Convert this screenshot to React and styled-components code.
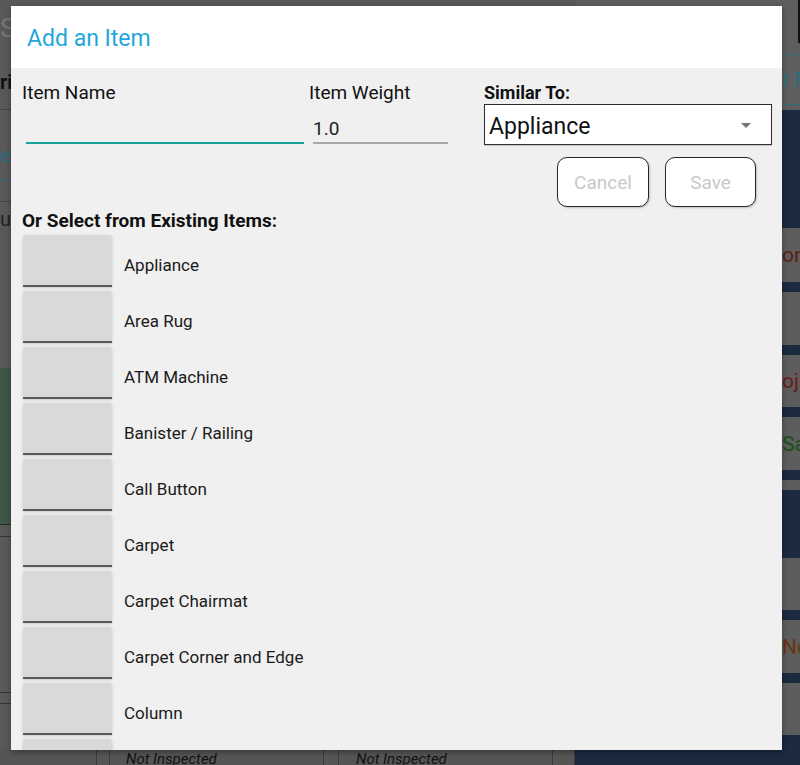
import React from "react";
import styled, { createGlobalStyle } from "styled-components";

const GlobalStyle = createGlobalStyle`
  html, body {
    margin: 0;
    padding: 0;
    width: 800px;
    height: 765px;
    overflow: hidden;
    font-family: Roboto, "Noto Sans", "Liberation Sans", sans-serif;
  }
  * { box-sizing: border-box; }
`;

const Page = styled.div`
  position: relative;
  width: 800px;
  height: 765px;
  overflow: hidden;
  background: #5a5a5a;
  display: flex;
  flex-direction: column;
`;

const BackTop = styled.div`
  height: 750px;
  flex-shrink: 0;
  display: flex;
  overflow: hidden;
`;

const LeftCol = styled.div`
  width: 575px;
  display: flex;
  flex-direction: column;
  background: #595959;
  overflow: hidden;
`;

const LeftStrip = styled.div`
  height: ${(p) => p.h}px;
  flex-shrink: 0;
  background: ${(p) => p.bg || "transparent"};
  border-bottom: ${(p) => (p.line ? `1px solid ${p.line}` : "none")};
  color: ${(p) => p.color || "#222"};
  font-size: ${(p) => p.fs || 20}px;
  font-weight: ${(p) => (p.bold ? 700 : 400)};
  display: flex;
  align-items: center;
  white-space: nowrap;
  overflow: hidden;
`;

const RightCol = styled.div`
  flex: 1;
  display: flex;
  flex-direction: column;
  background: #1b2a3f;
  position: relative;
  overflow: hidden;
`;

const RightStrip = styled.div`
  height: ${(p) => p.h}px;
  flex-shrink: 0;
  background: ${(p) => p.bg || "#1b2a3f"};
  border-bottom: ${(p) => (p.line ? `1px solid ${p.line}` : "none")};
  color: ${(p) => p.color || "#222"};
  font-size: 21px;
  display: flex;
  align-items: center;
  padding-left: 207px;
  white-space: nowrap;
  overflow: hidden;
`;

const EdgeBar = styled.div`
  position: absolute;
  right: 0;
  top: 0;
  width: 2px;
  height: 43px;
  background: #111;
`;

const BackBottom = styled.div`
  height: 15px;
  flex-shrink: 0;
  display: flex;
  background: #555;
`;

const Cell = styled.div`
  width: ${(p) => p.w}px;
  flex-shrink: 0;
  border-right: 1px solid #3a3a3a;
  font-size: 15px;
  font-style: italic;
  color: #111;
  padding-left: ${(p) => p.pad || 0}px;
  padding-top: 1px;
  line-height: 16px;
  white-space: nowrap;
  overflow: hidden;
`;

const NavyCell = styled.div`
  flex: 1;
  background: #1b2a3f;
`;

const Modal = styled.div`
  position: absolute;
  left: 11px;
  top: 6px;
  width: 771px;
  height: 744px;
  background: #f0f0f0;
  display: flex;
  flex-direction: column;
  overflow: hidden;
  box-shadow: 0 2px 6px rgba(0, 0, 0, 0.35);
`;

const Header = styled.div`
  height: 62px;
  flex-shrink: 0;
  background: #ffffff;
  display: flex;
  align-items: center;
  padding-left: 16px;
`;

const Title = styled.h1`
  margin: 0;
  font-weight: 400;
  font-size: 23px;
  color: #1fa7dc;
  position: relative;
  top: 1px;
`;

const Body = styled.div`
  flex: 1;
  padding: 14px 10px 0 11px;
  display: flex;
  flex-direction: column;
  overflow: hidden;
`;

const FieldRow = styled.div`
  display: flex;
`;

const Field = styled.div`
  width: ${(p) => p.w}px;
  margin-left: ${(p) => p.ml || 0}px;
  display: flex;
  flex-direction: column;
`;

const Label = styled.label`
  line-height: 21px;
  font-weight: ${(p) => (p.bold ? 700 : 400)};
  color: #111;
  font-size: ${(p) => (p.bold ? 18 : 19)}px;
`;

const TextInput = styled.div`
  height: 41px;
  margin-left: ${(p) => p.ml || 0}px;
  border-bottom: ${(p) => (p.active ? "2px solid #17a398" : "2px solid #a8a8a8")};
  font-size: 19px;
  color: #222;
  display: flex;
  align-items: flex-end;
  padding-bottom: 2px;
`;

const Select = styled.div`
  height: 41px;
  margin-top: 1px;
  background: #ffffff;
  border: 1px solid #2e2e2e;
  box-shadow: 0 1px 1px rgba(0, 0, 0, 0.15);
  display: flex;
  align-items: center;
  justify-content: space-between;
  padding: 3px 20px 0 4px;
  font-size: 23px;
  color: #111;
`;

const Caret = styled.span`
  width: 0;
  height: 0;
  border-left: 5px solid transparent;
  border-right: 5px solid transparent;
  border-top: 5px solid #757575;
  margin-top: -2px;
`;

const ButtonRow = styled.div`
  display: flex;
  justify-content: flex-end;
  gap: 16px;
  margin-top: 12px;
  padding-right: 16px;
`;

const Button = styled.button`
  width: ${(p) => p.w}px;
  height: 50px;
  background: #ffffff;
  border: 1px solid #262626;
  border-radius: 10px;
  box-shadow: 1px 1px 2px rgba(0, 0, 0, 0.2);
  font-family: inherit;
  font-size: 19px;
  color: #c9c9c9;
  padding: 0;
`;

const SectionTitle = styled.h2`
  margin: 4px 0 0;
  font-size: 19px;
  line-height: 20px;
  font-weight: 700;
  color: #111;
`;

const List = styled.div`
  margin-top: 4px;
  margin-left: 1px;
  display: flex;
  flex-direction: column;
`;

const Row = styled.div`
  height: 56px;
  flex-shrink: 0;
  display: flex;
  align-items: flex-start;
`;

const Tile = styled.div`
  width: 89px;
  height: 52px;
  background: #d9d9d9;
  border-radius: 3px 3px 0 0;
  border-bottom: 2px solid #5a5a5a;
  box-shadow: 0 1px 3px rgba(0, 0, 0, 0.18);
  flex-shrink: 0;
`;

const ItemLabel = styled.span`
  margin-left: 12px;
  line-height: 52px;
  font-size: 17px;
  color: #1a1a1a;
  position: relative;
  top: 4px;
`;

const items = [
  "Appliance",
  "Area Rug",
  "ATM Machine",
  "Banister / Railing",
  "Call Button",
  "Carpet",
  "Carpet Chairmat",
  "Carpet Corner and Edge",
  "Column",
  "Counter",
];

const rightStrips = [
  { h: 55, bg: "#5e5e5e", line: "#2e6f7c" },
  { h: 50, bg: "#5e5e5e", color: "#2c6f80", text: "t F", line: "#2e6f7c" },
  { h: 5, bg: "#5e5e5e" },
  { h: 118 },
  { h: 54, bg: "#5d5d5d", color: "#5e1c18", text: "orn" },
  { h: 10 },
  { h: 53, bg: "#5d5d5d" },
  { h: 10 },
  { h: 52, bg: "#5d5d5d", color: "#6a1d1a", text: "oj" },
  { h: 10 },
  { h: 53, bg: "#5d5d5d", color: "#17501a", text: "Sa" },
  { h: 10 },
  { h: 10, bg: "#5d5d5d" },
  { h: 68 },
  { h: 52, bg: "#5d5d5d" },
  { h: 10 },
  { h: 53, bg: "#5d5d5d", color: "#6a3510", text: "No" },
  { h: 10 },
  { h: 52, bg: "#5d5d5d" },
  { h: 15 },
];

export default function App() {
  return (
    <>
      <GlobalStyle />
      <Page>
        <BackTop>
          <LeftCol>
            <LeftStrip h={55} fs={26} color="#777">Si</LeftStrip>
            <LeftStrip h={55} bold color="#111" line="#444">ri</LeftStrip>
            <LeftStrip h={20} />
            <LeftStrip h={50} color="#2d6b7c" line="#2d6b7c">ec</LeftStrip>
            <LeftStrip h={22} line="#444" />
            <LeftStrip h={33} color="#222">un</LeftStrip>
            <LeftStrip h={133} />
            <LeftStrip h={157} bg="#3f5647" line="#1e3322" />
            <LeftStrip h={12} line="#333" />
            <LeftStrip h={156} line="#333" />
            <LeftStrip h={11} line="#333" />
            <LeftStrip h={46} />
          </LeftCol>
          <RightCol>
            <EdgeBar />
            {rightStrips.map((s, i) => (
              <RightStrip key={i} h={s.h} bg={s.bg} color={s.color} line={s.line}>
                {s.text}
              </RightStrip>
            ))}
          </RightCol>
        </BackTop>
        <BackBottom>
          <Cell w={97} />
          <Cell w={13} />
          <Cell w={214} pad={16}>Not Inspected</Cell>
          <Cell w={15} />
          <Cell w={214} pad={17}>Not Inspected</Cell>
          <Cell w={22} />
          <NavyCell />
        </BackBottom>

        <Modal>
          <Header>
            <Title>Add an Item</Title>
          </Header>
          <Body>
            <FieldRow>
              <Field w={282}>
                <Label>Item Name</Label>
                <TextInput active ml={4} />
              </Field>
              <Field w={139} ml={5}>
                <Label>Item Weight</Label>
                <TextInput ml={4}>1.0</TextInput>
              </Field>
              <Field w={288} ml={36}>
                <Label bold>Similar To:</Label>
                <Select>
                  Appliance
                  <Caret />
                </Select>
              </Field>
            </FieldRow>
            <ButtonRow>
              <Button w={92}>Cancel</Button>
              <Button w={91}>Save</Button>
            </ButtonRow>
            <SectionTitle>Or Select from Existing Items:</SectionTitle>
            <List>
              {items.map((name) => (
                <Row key={name}>
                  <Tile />
                  <ItemLabel>{name}</ItemLabel>
                </Row>
              ))}
            </List>
          </Body>
        </Modal>
      </Page>
    </>
  );
}
